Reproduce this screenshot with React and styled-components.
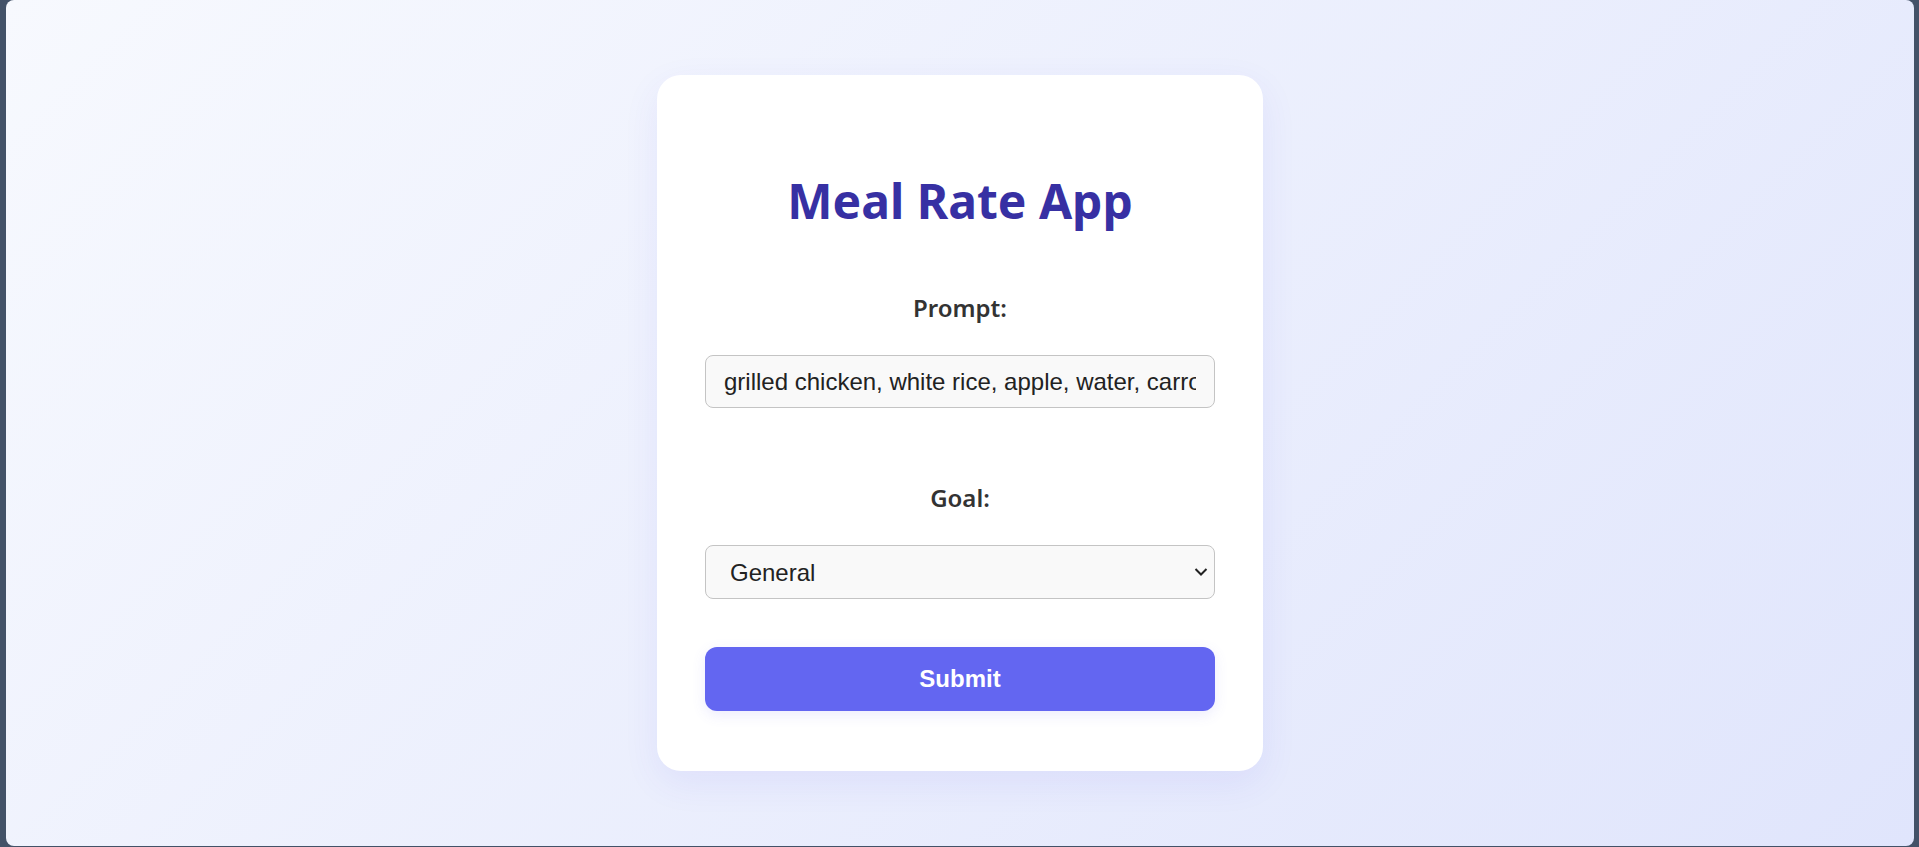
import React, { useState } from 'react';
import styled, { createGlobalStyle } from 'styled-components';

const GlobalStyle = createGlobalStyle`
  html, body {
    margin: 0;
    padding: 0;
    background: #435268;
  }
  * {
    box-sizing: border-box;
  }
`;

const Frame = styled.div`
  margin: 0 5px 1px 6px;
  min-height: 846px;
  border-radius: 8px;
  background: linear-gradient(135deg, #f7f9fe 0%, #e0e5fc 100%);
  display: flex;
  justify-content: center;
  align-items: flex-start;
  padding-top: 75px;
`;

const Card = styled.form`
  width: 606px;
  background: #ffffff;
  border-radius: 24px;
  padding: 36px 48px 60px;
  box-shadow: 0 12px 36px rgba(79, 70, 229, 0.08);
  display: flex;
  flex-direction: column;
`;

const Title = styled.h1`
  margin: 60px 0 62px;
  font-family: 'Noto Sans', 'Open Sans', sans-serif;
  font-size: 48px;
  line-height: 60px;
  font-weight: 700;
  color: #3730a3;
  text-align: center;
`;

const Group = styled.div`
  display: flex;
  flex-direction: column;
  margin-bottom: ${(p) => p.$gap}px;
`;

const Label = styled.label`
  font-family: 'Noto Sans', 'Open Sans', sans-serif;
  font-size: 24px;
  line-height: 29px;
  font-weight: 600;
  color: #333333;
  text-align: center;
  margin-bottom: 33px;
`;

const fieldCss = `
  width: 100%;
  font-family: 'Liberation Sans', Arial, sans-serif;
  font-size: 24px;
  color: #222222;
  background: #f9f9f9;
  border: 1px solid #c4c4c4;
  border-radius: 8px;
  outline: none;
`;

const TextInput = styled.input`
  ${fieldCss}
  height: 53px;
  padding: 0 18px;
`;

const SelectWrap = styled.div`
  position: relative;
  width: 100%;
`;

const Select = styled.select`
  ${fieldCss}
  height: 54px;
  padding: 0 40px 0 24px;
  appearance: none;
  -webkit-appearance: none;
  display: block;
`;

const Chevron = styled.svg`
  position: absolute;
  right: 7px;
  top: 50%;
  transform: translateY(-50%);
  pointer-events: none;
`;

const SubmitButton = styled.button`
  width: 100%;
  height: 64px;
  border: none;
  border-radius: 12px;
  background: #6366f1;
  color: #ffffff;
  font-family: 'Liberation Sans', Arial, sans-serif;
  font-size: 24px;
  font-weight: 700;
  cursor: pointer;
  box-shadow: 0 4px 14px rgba(99, 102, 241, 0.12);
`;

const App = () => {
  const [prompt, setPrompt] = useState(
    'grilled chicken, white rice, apple, water, carrots'
  );
  const [goal, setGoal] = useState('general');

  return (
    <>
      <GlobalStyle />
      <Frame>
        <Card onSubmit={(e) => e.preventDefault()}>
          <Title>Meal Rate App</Title>
          <Group $gap={75}>
            <Label htmlFor='prompt'>Prompt:</Label>
            <TextInput
              id='prompt'
              value={prompt}
              onChange={(e) => setPrompt(e.target.value)}
            />
          </Group>
          <Group $gap={48}>
            <Label htmlFor='goal'>Goal:</Label>
            <SelectWrap>
              <Select
                id='goal'
                value={goal}
                onChange={(e) => setGoal(e.target.value)}
              >
                <option value='general'>General</option>
                <option value='weight-loss'>Weight Loss</option>
                <option value='muscle-gain'>Muscle Gain</option>
              </Select>
              <Chevron width='14' height='9' viewBox='0 0 14 9'>
                <polyline
                  points='1.5,1.5 7,7 12.5,1.5'
                  fill='none'
                  stroke='#222'
                  strokeWidth='2'
                />
              </Chevron>
            </SelectWrap>
          </Group>
          <SubmitButton type='submit'>Submit</SubmitButton>
        </Card>
      </Frame>
    </>
  );
};

export default App;
